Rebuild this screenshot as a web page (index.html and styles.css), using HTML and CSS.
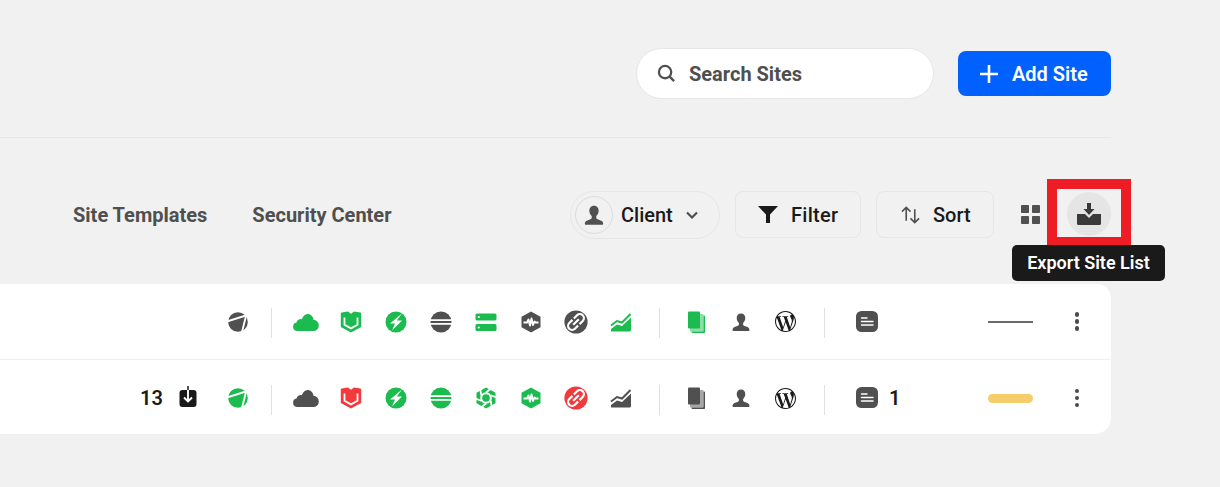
FILE: index.html
```html
<!DOCTYPE html>
<html lang="en">
<head>
<meta charset="utf-8">
<title>Sites</title>
<link rel="stylesheet" href="styles.css">
</head>
<body>
<svg class="defs" aria-hidden="true">
  <symbol id="i-wedge" viewBox="0 0 24 24">
    <circle cx="12" cy="12" r="9.800" fill="currentColor"/>
    <path d="M0 11.750 24 4.250M20.500 4 15.500 24" fill="none" stroke="#fff" stroke-width="1.900"/>
  </symbol>
  <symbol id="i-cloud" viewBox="0 0 26 24">
    <path fill="currentColor" d="M4.500 21a4.300 4.300 0 0 1-1-8.500 4.300 4.300 0 0 1 5.300-3.300C9.800 6.300 12 4 14.500 4c3.300 0 5.600 2.500 6 5.800a5.700 5.700 0 0 1 5.300 5.700 5.500 5.500 0 0 1-5.500 5.500z"/>
  </symbol>
  <symbol id="i-shield" viewBox="0 0 24 24">
    <path fill="currentColor" d="M1.800 2.800Q5.500 1.800 9 1.600L12 3.800 15 1.600Q18.500 1.800 22.200 2.800V17L12 22.500 1.800 17z"/>
    <path fill="none" stroke="#fff" stroke-width="1.800" d="M5.500 7.500V14.800L12 18.400 18.500 14.800V7.500"/>
  </symbol>
  <symbol id="i-bolt" viewBox="0 0 24 24">
    <circle cx="12" cy="12" r="10.500" fill="currentColor"/>
    <path fill="#fff" d="M18 3.500 6 13.500h5L8 20.500 18 10.500h-5.200z"/>
  </symbol>
  <symbol id="i-stripe" viewBox="0 0 24 24">
    <circle cx="12" cy="12" r="10.500" fill="currentColor"/>
    <path stroke="#fff" stroke-width="1.800" d="M0 10.200H24M0 13.800H24"/>
  </symbol>
  <symbol id="i-server" viewBox="0 0 24 24">
    <rect x="1.500" y="3.500" width="21" height="7" rx="1.500" fill="currentColor"/>
    <rect x="1.500" y="14" width="21" height="7" rx="1.500" fill="currentColor"/>
    <circle cx="4.800" cy="7" r="1.100" fill="#fff"/>
    <circle cx="4.800" cy="17.500" r="1.100" fill="#fff"/>
  </symbol>
  <symbol id="i-aperture" viewBox="0 0 24 24">
    <path fill="currentColor" d="M12 1.500 21.500 6.800V17.200L12 22.500 2.500 17.200V6.800z"/>
    <circle cx="12" cy="12" r="5.800" fill="#fff"/>
    <circle cx="12" cy="12" r="3.800" fill="currentColor"/>
    <g stroke="#fff" stroke-width="1.800" fill="none">
      <path d="M12 6.500 20 0"/>
      <path d="M12 6.500 20 0" transform="rotate(60 12 12)"/>
      <path d="M12 6.500 20 0" transform="rotate(120 12 12)"/>
      <path d="M12 6.500 20 0" transform="rotate(180 12 12)"/>
      <path d="M12 6.500 20 0" transform="rotate(240 12 12)"/>
      <path d="M12 6.500 20 0" transform="rotate(300 12 12)"/>
    </g>
  </symbol>
  <symbol id="i-hex" viewBox="0 0 24 24">
    <path fill="currentColor" d="M12 1.500 21.500 6.800V17.200L12 22.500 2.500 17.200V6.800z"/>
    <path fill="none" stroke="#fff" stroke-width="1.900" stroke-linejoin="round" d="M4.500 12.500H8L9.500 9.500 11 15.500 12.500 8.500 14 15 15.500 11.500 16.500 12.500H19.500"/>
  </symbol>
  <symbol id="i-link" viewBox="0 0 24 24">
    <circle cx="12" cy="12" r="11.600" fill="currentColor"/>
    <g transform="rotate(-45 12 12)" fill="none" stroke="#fff" stroke-width="2.200">
      <path d="M11 8H6.500a4 4 0 0 0 0 8H11"/>
      <path d="M13 8H17.500a4 4 0 0 1 0 8H13"/>
      <path d="M8 12H16"/>
    </g>
  </symbol>
  <symbol id="i-chart" viewBox="0 0 24 24">
    <path fill="none" stroke="currentColor" stroke-width="2" d="M2 15.500 8 11l5 1.500L21.500 4"/>
    <path fill="currentColor" d="M2 21.500V19L8 14.500l5 1.500 9-8.500V20a1.500 1.500 0 0 1-1.500 1.500z"/>
  </symbol>
  <symbol id="i-files" viewBox="0 0 24 24">
    <rect x="7.500" y="5.500" width="13.500" height="17.500" rx=".8" fill="currentColor"/>
    <rect x="6" y="4" width="13.500" height="17.500" rx=".8" fill="#fff"/>
    <rect x="6" y="4" width="13.500" height="17.500" rx=".8" fill="currentColor" opacity=".5"/>
    <rect x="4" y="1.500" width="12" height="17" rx="1" fill="currentColor"/>
  </symbol>
  <symbol id="i-user" viewBox="0 0 24 24">
    <path fill="currentColor" d="M12 3.500c2.700 0 4.300 2 4.300 4.500 0 2-.9 3.900-2.200 5v1.500c0 .9 1 1.300 2.300 1.800 2.300.8 3.900 1.400 4.100 3.500.1.900-.4 1.200-1.200 1.200H4.700c-.8 0-1.300-.3-1.200-1.200.2-2.100 1.800-2.700 4.100-3.500 1.300-.5 2.300-.9 2.300-1.800V13C8.600 11.900 7.700 10 7.700 8c0-2.500 1.600-4.500 4.300-4.500z"/>
  </symbol>
  <symbol id="i-wp" viewBox="0 0 24 24">
    <path fill="currentColor" d="M21.469 6.825c.84 1.537 1.318 3.3 1.318 5.175 0 3.979-2.156 7.456-5.363 9.325l3.295-9.527c.615-1.54.82-2.771.82-3.864 0-.405-.026-.78-.07-1.11m-7.981.105c.647-.03 1.232-.105 1.232-.105.582-.075.514-.93-.067-.899 0 0-1.755.135-2.88.135-1.064 0-2.85-.15-2.85-.15-.585-.03-.661.855-.075.885 0 0 .54.061 1.125.09l1.68 4.605-2.37 7.08L5.354 6.9c.649-.03 1.234-.1 1.234-.1.585-.075.516-.93-.065-.896 0 0-1.746.138-2.874.138-.2 0-.438-.008-.69-.015C4.911 3.150 8.235 1.215 12 1.215c2.809 0 5.365 1.072 7.286 2.833-.046-.003-.091-.009-.141-.009-1.060 0-1.812.923-1.812 1.914 0 .89.513 1.643 1.060 2.531.411.72.89 1.643.89 2.977 0 .915-.354 1.994-.821 3.479l-1.075 3.585-3.9-11.61.001.014zM12 22.784c-1.059 0-2.081-.153-3.048-.437l3.237-9.406 3.315 9.087c.024.053.05.101.078.149-1.120.393-2.325.609-3.582.609M1.211 12c0-1.564.336-3.050.935-4.390L7.290 21.709C3.694 19.960 1.212 16.271 1.211 12M12 0C5.385 0 0 5.385 0 12s5.385 12 12 12 12-5.385 12-12S18.615 0 12 0"/>
  </symbol>
  <symbol id="i-note" viewBox="0 0 22 22">
    <rect width="22" height="21" rx="5.500" fill="currentColor"/>
    <path stroke="#fff" stroke-width="1.500" stroke-linecap="round" d="M5.500 7H11M5.500 10.500H17M5.500 14H17"/>
  </symbol>
  <symbol id="i-down" viewBox="0 0 18 24">
    <rect x=".5" y="4" width="17" height="17" rx="3" fill="currentColor"/>
    <path stroke="currentColor" stroke-width="1.500" d="M9 0V4"/>
    <path fill="none" stroke="#fff" stroke-width="1.900" d="M9 4V15M5 11.500 9 15.500 13 11.500"/>
  </symbol>
</svg>

<div class="page">
  <header class="topbar">
    <div class="search">
      <svg class="search-icon" viewBox="0 0 20 20"><circle cx="8.500" cy="8.500" r="6.500"/><path d="M13.300 13.300 18 18"/></svg>
      <span>Search Sites</span>
    </div>
    <button class="add-site">
      <svg class="plus-icon" viewBox="0 0 18 18"><path d="M9 0V18M0 9H18"/></svg>
      <span>Add Site</span>
    </button>
  </header>

  <section class="toolbar">
    <nav class="tabs">
      <a>Site Templates</a>
      <a>Security Center</a>
    </nav>
    <div class="actions">
      <button class="client">
        <span class="avatar"><svg class="avatar-icon"><use href="#i-user"/></svg></span>
        <span>Client</span>
        <svg class="chevron" viewBox="0 0 12 8"><path d="M1 1.500 6 6.500 11 1.500"/></svg>
      </button>
      <button class="tool filter">
        <svg class="funnel" viewBox="0 0 20 17"><path d="M0 0H20L12 8.500V17H8V8.500z"/></svg>
        <span>Filter</span>
      </button>
      <button class="tool sort">
        <svg class="sort-icon" viewBox="0 0 20 18"><path d="M5.500 15V1M1 5.500 5.500 1 10 5.500M14.500 3V17M10 12.500 14.500 17 19 12.500"/></svg>
        <span>Sort</span>
      </button>
      <svg class="grid-icon" viewBox="0 0 19 19"><rect width="8" height="8" rx=".8"/><rect x="11" width="8" height="8" rx=".8"/><rect y="11" width="8" height="8" rx=".8"/><rect x="11" y="11" width="8" height="8" rx=".8"/></svg>
      <div class="export">
        <svg class="export-icon" viewBox="0 0 24 22"><path d="M10 0h4v6h3.500L12 12 6.500 6H10z"/><path d="M0 11H8L12 15 16 11H24V20.500A1.500 1.500 0 0 1 22.500 22H1.500A1.500 1.500 0 0 1 0 20.500z"/></svg>
        <span class="highlight"></span>
        <span class="tooltip">Export Site List</span>
      </div>
    </div>
  </section>

  <section class="card">
    <div class="row">
      <div class="updates"></div>
      <div class="cell dark"><svg><use href="#i-wedge"/></svg></div>
      <i class="sep"></i>
      <div class="cell green"><svg class="cloud"><use href="#i-cloud"/></svg></div>
      <div class="cell green"><svg><use href="#i-shield"/></svg></div>
      <div class="cell green"><svg><use href="#i-bolt"/></svg></div>
      <div class="cell dark"><svg><use href="#i-stripe"/></svg></div>
      <div class="cell green"><svg><use href="#i-server"/></svg></div>
      <div class="cell dark"><svg><use href="#i-hex"/></svg></div>
      <div class="cell dark"><svg><use href="#i-link"/></svg></div>
      <div class="cell green"><svg><use href="#i-chart"/></svg></div>
      <i class="sep wide"></i>
      <div class="cell green"><svg><use href="#i-files"/></svg></div>
      <div class="cell dark"><svg><use href="#i-user"/></svg></div>
      <div class="cell black"><svg class="wp"><use href="#i-wp"/></svg></div>
      <i class="sep end"></i>
      <div class="notes dark"><svg><use href="#i-note"/></svg></div>
      <div class="bar line"></div>
      <div class="dots"><b></b><b></b><b></b></div>
    </div>
    <div class="row second">
      <div class="updates"><span class="count">13</span><svg class="down"><use href="#i-down"/></svg></div>
      <div class="cell green"><svg><use href="#i-wedge"/></svg></div>
      <i class="sep"></i>
      <div class="cell dark"><svg class="cloud"><use href="#i-cloud"/></svg></div>
      <div class="cell red"><svg><use href="#i-shield"/></svg></div>
      <div class="cell green"><svg><use href="#i-bolt"/></svg></div>
      <div class="cell green"><svg><use href="#i-stripe"/></svg></div>
      <div class="cell green"><svg><use href="#i-aperture"/></svg></div>
      <div class="cell green"><svg><use href="#i-hex"/></svg></div>
      <div class="cell red"><svg><use href="#i-link"/></svg></div>
      <div class="cell dark"><svg><use href="#i-chart"/></svg></div>
      <i class="sep wide"></i>
      <div class="cell dark"><svg><use href="#i-files"/></svg></div>
      <div class="cell dark"><svg><use href="#i-user"/></svg></div>
      <div class="cell black"><svg class="wp"><use href="#i-wp"/></svg></div>
      <i class="sep end"></i>
      <div class="notes dark"><svg><use href="#i-note"/></svg><span class="note-count">1</span></div>
      <div class="bar pill"></div>
      <div class="dots"><b></b><b></b><b></b></div>
    </div>
  </section>
</div>
</body>
</html>
```

FILE: styles.css
```css
* { box-sizing: border-box; }
html, body { margin: 0; padding: 0; }
body {
  background: #f1f1f1;
  font-family: Roboto, "Liberation Sans", sans-serif;
  color: #1a1a1a;
  height: 487px;
  overflow: hidden;
}
button { font: inherit; color: inherit; background: none; border: 0; padding: 0; }
.defs { width: 0; height: 0; position: absolute; }
.page { width: 1111px; }

.topbar {
  display: flex;
  justify-content: flex-end;
  align-items: center;
  gap: 24px;
  padding: 48px 0 38px;
  border-bottom: 1px solid #e6e6e6;
}
.search {
  width: 298px;
  height: 51px;
  background: #fff;
  border: 1px solid #e6e6e6;
  border-radius: 26px;
  display: flex;
  align-items: center;
  gap: 13px;
  padding-left: 20px;
  font-size: 20px;
  font-weight: 700;
  color: #4f4f4f;
}
.search-icon { width: 19px; height: 19px; fill: none; stroke: #4f4f4f; stroke-width: 2.4; }
.add-site {
  width: 153px;
  height: 45px;
  background: #0061ff;
  border-radius: 8px;
  color: #fff;
  font-size: 20px;
  font-weight: 600;
  display: flex;
  align-items: center;
  gap: 14px;
  padding-left: 22px;
}
.plus-icon { width: 18px; height: 18px; fill: none; stroke: #fff; stroke-width: 2.6; }

.toolbar {
  display: flex;
  align-items: center;
  justify-content: space-between;
  padding: 53px 0 45px 73px;
}
.tabs { display: flex; gap: 45px; font-size: 20px; font-weight: 700; color: #4f4f4f; }
.actions { display: flex; align-items: center; }
.client {
  width: 150px;
  height: 48px;
  border: 1px solid #e6e6e6;
  border-radius: 24px;
  display: flex;
  align-items: center;
  padding-left: 4px;
  font-size: 20px;
  font-weight: 500;
}
.avatar {
  width: 38px;
  height: 38px;
  border: 1px solid #dcdcdc;
  border-radius: 50%;
  display: flex;
  align-items: center;
  justify-content: center;
  margin-right: 8px;
}
.avatar-icon { width: 26px; height: 26px; color: #505050; }
.chevron { width: 12px; height: 8px; margin-left: 13px; fill: none; stroke: #505050; stroke-width: 2.2; }
.tool {
  height: 47px;
  border: 1px solid #e6e6e6;
  border-radius: 8px;
  display: flex;
  align-items: center;
  font-size: 20px;
  font-weight: 500;
  margin: 0 0 1px 15px;
}
.filter { width: 126px; padding-left: 22px; gap: 13px; letter-spacing: .3px; }
.sort { width: 118px; padding-left: 24px; gap: 13px; }
.funnel { width: 20px; height: 17px; fill: #1a1a1a; }
.sort-icon { width: 19px; height: 18px; fill: none; stroke: #505050; stroke-width: 1.7; }
.grid-icon { width: 19px; height: 19px; fill: #505050; margin: 0 0 1px 27px; }
.export {
  position: relative;
  width: 44px;
  height: 44px;
  margin: 0 0 2px 27px;
  border-radius: 50%;
  background: #e5e5e5;
  display: flex;
  align-items: center;
  justify-content: center;
}
.export-icon { width: 24px; height: 22px; fill: #3a3a3a; }
.highlight {
  position: absolute;
  left: -20px;
  top: -13px;
  width: 84px;
  height: 68px;
  border: 10px solid #ee1c25;
}
.tooltip {
  position: absolute;
  left: -55px;
  top: 53px;
  width: 153px;
  height: 36px;
  padding-bottom: 2px;
  background: #1a1a1a;
  color: #fff;
  border-radius: 5px;
  font-size: 18px;
  font-weight: 600;
  display: flex;
  align-items: center;
  justify-content: center;
  white-space: nowrap;
}

.card { background: #fff; border-radius: 0 14px 16px 0; }
.row { display: flex; align-items: center; height: 76px; border-bottom: 1px solid #f0f0f0; }
.row.second { height: 74px; border-bottom: 0; padding-top: 2px; }
.updates { width: 215px; display: flex; align-items: center; padding-left: 140px; }
.count { width: 39px; font-size: 20px; font-weight: 600; color: #1a1a1a; }
.down { width: 18px; height: 24px; color: #1a1a1a; }
.cell { width: 45px; height: 24px; display: flex; justify-content: center; }
.cell svg, .notes svg { width: 24px; height: 24px; }
.cell .cloud { width: 26px; flex: none; }
.cell .wp { width: 21px; height: 21px; margin-top: 1.5px; }
.dark { color: #505050; }
.green { color: #1cbb4f; }
.red { color: #f23a3c; }
.black { color: #1a1a1a; }
.sep { width: 1px; height: 30px; background: #e0e0e0; margin: 3px 11px 0; }
.sep.wide { margin: 3px 13px 0 16px; }
.sep.end { margin: 3px 31px 0 16px; }
.notes { width: 132px; display: flex; align-items: center; gap: 11px; }
.notes svg { width: 22px; height: 22px; }
.note-count { font-size: 20px; font-weight: 600; color: #1a1a1a; }
.bar { width: 45px; }
.bar.line { height: 2px; background: #6a6a6a; }
.bar.pill { height: 9px; background: #f5cd6b; border-radius: 5px; }
.dots { display: flex; flex-direction: column; gap: 2.5px; margin-left: 41.5px; }
.dots b { width: 4.5px; height: 4.5px; border-radius: 50%; background: #4a4a4a; }
```
